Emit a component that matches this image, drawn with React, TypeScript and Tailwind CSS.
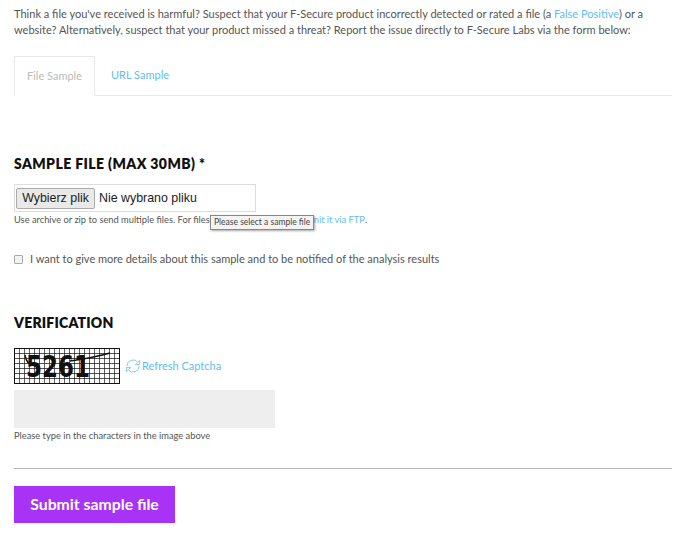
import React from "react";

const bodyFont = "font-['Lato',sans-serif]";

const Captcha: React.FC = () => (
  <svg width="106" height="36" viewBox="0 0 106 36" className="block shrink-0">
    <defs>
      <pattern id="grid" width="5" height="5" patternUnits="userSpaceOnUse">
        <path d="M0 0H5M0 0V5" stroke="#1a1a1a" strokeWidth="1.4" fill="none" />
      </pattern>
    </defs>
    <rect width="106" height="36" fill="#fff" />
    <rect width="106" height="36" fill="url(#grid)" />
    <rect x="0.5" y="0.5" width="105" height="35" fill="none" stroke="#111" />
    <text x="12" y="29" fontFamily="'DejaVu Sans',sans-serif" fontWeight="700" fontSize="30" fill="#111" textLength="64" lengthAdjust="spacingAndGlyphs">
      5261
    </text>
    <path d="M11 7c1 6 3 10 12 11M56 13c14-2 26-4 40-8" stroke="#111" strokeWidth="1.5" fill="none" />
  </svg>
);

const RefreshIcon: React.FC = () => (
  <svg width="16" height="16" viewBox="0 0 17 17" fill="none" stroke="#7cc6ef" strokeWidth="1" className="shrink-0">
    <path d="M2 8.5A6.5 6.5 0 0 1 13.5 4.4L15.5 2.5V7H11l2-2" />
    <path d="M15 8.5A6.5 6.5 0 0 1 3.5 12.6L1.5 14.5V10H6l-2 2" />
  </svg>
);

export default function App() {
  return (
    <div className={`${bodyFont} w-[695px] h-[533px] overflow-hidden bg-white pl-[14px] pr-[23px] pt-[6px] text-[#555]`}>
      <p className="text-[11.04px] leading-[16px] h-[50px]">
        Think a file you've received is harmful? Suspect that your F-Secure product incorrectly detected or rated a file (a{" "}
        <a className="text-[#62bdf0]">False Positive</a>) or a website? Alternatively, suspect that your product missed a threat? Report the issue directly to F-Secure Labs via the form below:
      </p>

      <div className="flex h-[40px] border-b border-[#e8e8e8] text-[11px]">
        <div className="w-[81px] h-[40px] border border-b-white border-[#e8e8e8] bg-white flex items-center justify-center text-[#bbb]">
          File Sample
        </div>
        <a className="ml-4 flex items-center text-[#62bdf0]">URL Sample</a>
      </div>

      <h2 className="mt-[58px] text-[14px] leading-[20px] font-extrabold tracking-[0.4px] text-[#111]">SAMPLE FILE (MAX 30MB) *</h2>

      <div className="relative mt-[10px]">
        <div className="w-[242px] h-[28px] border border-[#ddd] flex items-center pl-px font-['Liberation_Sans',sans-serif] text-[12.4px] text-[#222]">
          <button className="h-[21px] w-[79px] bg-[#e9e9e9] border border-[#aaa] rounded-[2px] text-[#222]">Wybierz plik</button>
          <span className="ml-[4px]">Nie wybrano pliku</span>
        </div>
        <p className="mt-px flex text-[9.3px] leading-[14px]">
          <span>Use archive or zip to send multiple files. For files</span>
          <a className="ml-[104px] text-[#62bdf0]">nit it via FTP</a>
          <span>.</span>
        </p>
        <div className="absolute left-[196px] top-[31px] h-[15px] border border-[#888] bg-[#f4f4f4] px-[3px] text-[8.5px] leading-[13px] text-[#444] shadow-[1px_1px_2px_rgba(0,0,0,0.35)] whitespace-nowrap">
          Please select a sample file
        </div>
      </div>

      <label className="mt-[24px] flex items-center text-[11px] leading-[16px]">
        <span className="w-[9px] h-[9px] border border-[#aaa] rounded-[1px] bg-[#f2f2f2]" />
        <span className="ml-[7px]">I want to give more details about this sample and to be notified of the analysis results</span>
      </label>

      <h2 className="mt-[46px] text-[14px] leading-[20px] font-extrabold tracking-[0.2px] text-[#111]">VERIFICATION</h2>

      <div className="mt-[15px] flex items-center">
        <Captcha />
        <span className="ml-[5px]"><RefreshIcon /></span>
        <a className="ml-px mt-px text-[11px] text-[#62bdf0]">Refresh Captcha</a>
      </div>

      <div className="mt-[6px] w-[261px] h-[38px] bg-[#eeeeee]" />
      <p className="mt-px text-[9.3px] leading-[14px]">Please type in the characters in the image above</p>

      <hr className="mt-[25px] border-t border-[#b5b5b5]" />

      <button className="mt-[17px] w-[161px] h-[37px] pb-[2px] bg-[#a832f5] text-white text-[15.8px] font-bold">Submit sample file</button>
    </div>
  );
}
